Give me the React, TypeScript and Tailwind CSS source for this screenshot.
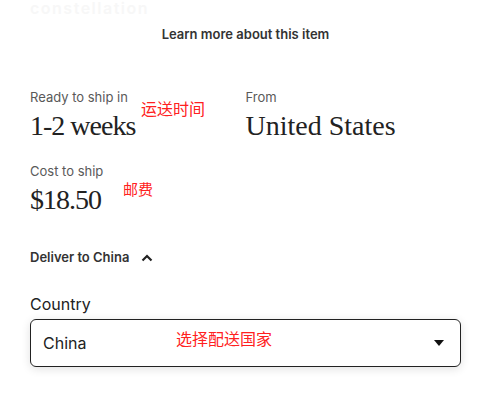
import React from "react";

export default function App() {
  return (
    <div className="relative w-[484px] h-[406px] overflow-hidden bg-white text-[#222222] font-['Inter','Noto_Sans',Arial,sans-serif]">
      <div className="h-[15px] overflow-hidden pl-[30px]">
        <div className="-mt-[4px] text-[16px] font-semibold tracking-[1.5px] text-[#f7f7f7]">constellation</div>
      </div>

      <div className="pl-[30px] pr-[23px]">
        <div className="mt-[10px] text-center text-[13px] leading-[18px] font-semibold text-[#333333]">
          Learn more about this item
        </div>

        <div className="mt-[45px] grid grid-cols-2">
          <div>
            <div className="text-[13px] leading-[18px] text-[#595959]">Ready to ship in</div>
            <div className="mt-[5px] font-['Liberation_Serif',serif] text-[28px] leading-[30px] tracking-[-1px] text-[#222222]">
              1-2 weeks
            </div>
          </div>
          <div>
            <div className="text-[13px] leading-[18px] text-[#595959]">From</div>
            <div className="mt-[5px] font-['Liberation_Serif',serif] text-[28px] leading-[30px] text-[#222222]">
              United States
            </div>
          </div>
        </div>

        <div className="mt-[21px]">
          <div className="text-[13px] leading-[18px] text-[#595959]">Cost to ship</div>
          <div className="mt-[5px] font-['Liberation_Serif',serif] text-[28px] leading-[30px] tracking-[-1px] text-[#222222]">
            $18.50
          </div>
        </div>

        <div className="mt-[33px] flex items-center gap-[12px]">
          <span className="text-[13px] leading-[18px] font-semibold text-[#333333]">Deliver to China</span>
          <svg width="12" height="8" viewBox="0 0 12 8" className="mt-[1px]">
            <path d="M1.5 6.5 L6 2 L10.5 6.5" fill="none" stroke="#222" strokeWidth="2.2" />
          </svg>
        </div>

        <div className="mt-[27px] text-[16px] leading-[22px] text-[#222222]">Country</div>
        <div className="mt-[4px] flex h-[48px] items-center justify-between rounded-[6px] border border-[#222222] pl-[12px] pr-[16px] shadow-[0_2px_10px_rgba(0,0,0,0.12)]">
          <span className="text-[16px] text-[#222222]">China</span>
          <svg width="10" height="6" viewBox="0 0 10 6">
            <path d="M0 0 L10 0 L5 6 Z" fill="#111" />
          </svg>
        </div>
      </div>

      <span className="absolute left-[141px] top-[100px] text-[16px] leading-none text-[#ff2020] font-['Noto_Sans_CJK_SC',sans-serif]">
        运送时间
      </span>
      <span className="absolute left-[123px] top-[181px] text-[15px] leading-none text-[#ff2020] font-['Noto_Sans_CJK_SC',sans-serif]">
        邮费
      </span>
      <span className="absolute left-[176px] top-[330px] text-[16px] leading-none text-[#ff2020] font-['Noto_Sans_CJK_SC',sans-serif]">
        选择配送国家
      </span>
    </div>
  );
}
